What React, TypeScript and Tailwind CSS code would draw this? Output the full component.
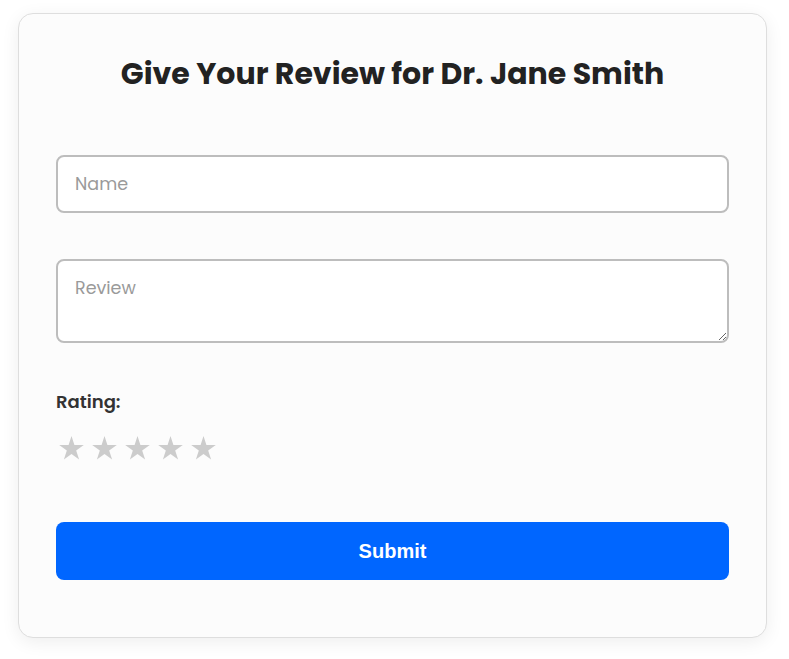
import { useState } from 'react'

function Star({ filled }: { filled: boolean }) {
  return (
    <svg width="25" height="24" viewBox="0 0 24 23" className={filled ? 'fill-[#ffc107]' : 'fill-[#cccccc]'}>
      <polygon points="12,0 14.8,8.6 23.8,8.6 16.5,13.9 19.3,22.5 12,17.2 4.7,22.5 7.5,13.9 0.2,8.6 9.2,8.6" />
    </svg>
  )
}

export default function App() {
  const [rating, setRating] = useState(0)

  return (
    <div className="min-h-[659px] bg-white pt-[13px] pl-[18px] font-['Poppins','Inter',sans-serif]">
      <div className="w-[749px] h-[625px] rounded-[15px] border border-[#dedede] bg-[#fcfcfc] px-[37px] shadow-[0_4px_18px_rgba(0,0,0,0.07)]">
        <h2 className="mt-[40px] text-center text-[30px] leading-[40px] font-bold text-[#222]">
          Give Your Review for Dr. Jane Smith
        </h2>
        <form className="mt-[61px]" onSubmit={(e) => e.preventDefault()}>
          <input
            type="text"
            placeholder="Name"
            className="block h-[58px] w-full rounded-lg border-2 border-[#bdbdbd] bg-white px-[17px] text-[17.5px] placeholder:text-[#9a9a9a] outline-none"
          />
          <textarea
            placeholder="Review"
            className="mt-[46px] block h-[84px] w-full rounded-lg border-2 border-[#bdbdbd] bg-white px-[17px] pt-[14px] text-[17.5px] placeholder:text-[#9a9a9a] outline-none"
          />
          <p className="mt-[45px] text-[18px] leading-[28px] font-semibold text-[#333]">Rating:</p>
          <div className="mt-[20px] flex gap-2 pl-[3px]">
            {[1, 2, 3, 4, 5].map((n) => (
              <button key={n} type="button" onClick={() => setRating(n)}>
                <Star filled={n <= rating} />
              </button>
            ))}
          </div>
          <button
            type="submit"
            className="mt-[62px] block h-[58px] w-full rounded-lg bg-[#0066ff] text-[20px] font-bold text-white font-['Liberation_Sans',Arial,sans-serif]"
          >
            Submit
          </button>
        </form>
      </div>
    </div>
  )
}
